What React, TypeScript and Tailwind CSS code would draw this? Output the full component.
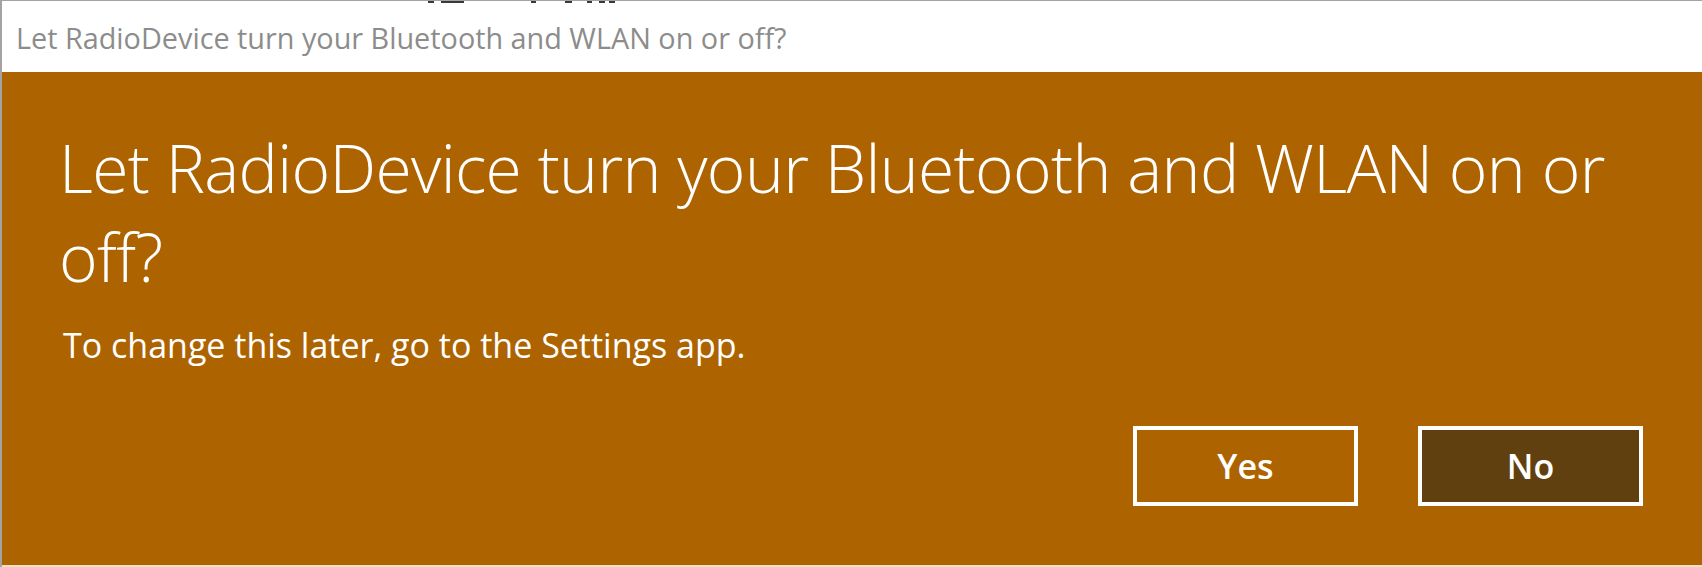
import React from "react";

const marks = [
  { l: 426, w: 6 },
  { l: 439, w: 23 },
  { l: 529, w: 5 },
  { l: 563, w: 7 },
  { l: 585, w: 5 },
  { l: 597, w: 6 },
  { l: 607, w: 6 },
];

export default function App() {
  return (
    <div
      className="relative w-[1702px] h-[567px] overflow-hidden flex flex-col border-t border-l-2 border-[#a3a3a3] bg-white"
      style={{ fontFamily: '"Open Sans", "Noto Sans", sans-serif' }}
    >
      {marks.map((m, i) => (
        <span
          key={i}
          className="absolute top-0 h-[2px] bg-[#3a3a3a]"
          style={{ left: m.l, width: m.w }}
        />
      ))}
      <div className="h-[71px] pt-[3px] pl-[14px] bg-white text-[28.8px] leading-[67px] text-[#8c8c8c]">
        Let RadioDevice turn your Bluetooth and WLAN on or off?
      </div>
      <div className="flex-1 flex flex-col bg-[#ad6300] pl-[57px] pr-[59px] pt-[51px] border-b-2 border-[#efe3c2]">
        <h1 className="text-[66px] leading-[89px] font-light text-white tracking-[-0.01em]">
          Let RadioDevice turn your Bluetooth and WLAN on or
          <br />
          off?
        </h1>
        <p className="mt-[22px] ml-[4px] text-[34px] leading-[44px] text-white">
          To change this later, go to the Settings app.
        </p>
        <div className="mt-[59px] flex justify-end gap-[60px]">
          <button className="w-[225px] h-[80px] border-4 border-white bg-transparent text-white text-[34px] font-semibold leading-none">
            Yes
          </button>
          <button className="w-[225px] h-[80px] border-4 border-white bg-[#61400f] text-white text-[34px] font-semibold leading-none">
            No
          </button>
        </div>
      </div>
    </div>
  );
}
